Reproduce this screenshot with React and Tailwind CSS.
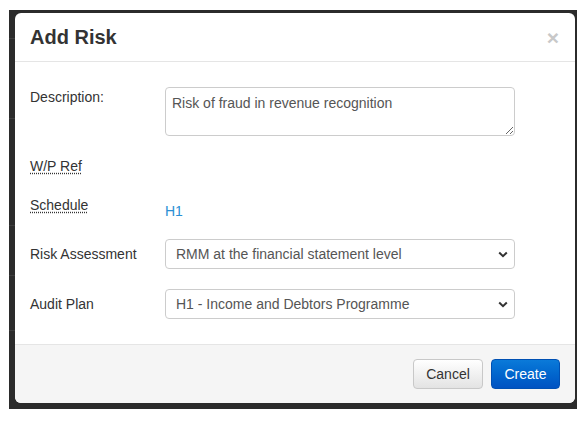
import React from "react";

const Chevron = () => (
  <svg width="10" height="7" viewBox="0 0 10 7" className="shrink-0">
    <path d="M1.2 1.5 L5 5.2 L8.8 1.5" fill="none" stroke="#333" strokeWidth="2" />
  </svg>
);

function SelectBox({ value }) {
  return (
    <div className="flex h-[30px] w-[350px] items-center justify-between rounded-[4px] border border-[#ccc] bg-white pl-[10px] pr-[6px] text-[14px] text-[#555]">
      <span>{value}</span>
      <Chevron />
    </div>
  );
}

export default function App() {
  return (
    <div
      className="min-h-[421px] w-[588px] bg-white pl-[9px] pt-[10px]"
      style={{ fontFamily: '"Liberation Sans", Arial, sans-serif' }}
    >
      <div className="flex h-[399px] w-[568px] bg-[#2b2b2b]">
        {/* page behind the backdrop, barely visible */}
        <div className="relative w-[6px] shrink-0 overflow-hidden">
          <div className="absolute left-0 right-0 top-[28px] h-px bg-[#3d3d3d]" />
          <div className="absolute left-0 right-0 top-[108px] h-px bg-[#3d3d3d]" />
          <div className="absolute left-0 right-0 top-[215px] h-px bg-[#3d3d3d]" />
          <div className="absolute left-0 right-0 top-[265px] h-px bg-[#3d3d3d]" />
          <div className="absolute left-0 right-0 top-[320px] h-px bg-[#3d3d3d]" />
        </div>

        <div className="mb-[6px] mt-[3px] flex w-[560px] flex-col overflow-hidden rounded-[6px] bg-white">
          <div className="flex h-[49px] shrink-0 items-center justify-between border-b border-[#e5e5e5] pl-[15px] pr-[16px]">
            <h4 className="text-[20px] font-bold leading-none text-[#333]">Add Risk</h4>
            <span className="text-[21px] font-bold leading-none text-[#c8c8c8]">×</span>
          </div>

          <div className="flex-1 px-[15px] pt-[25px] text-[14px] leading-[20px] text-[#333]">
            <div className="flex h-[49px]">
              <div className="w-[135px]">Description:</div>
              <textarea
                defaultValue="Risk of fraud in revenue recognition"
                className="h-[49px] w-[350px] rounded-[4px] border border-[#ccc] px-[6px] pt-[5px] text-[14px] leading-[20px] text-[#555] outline-none"
              />
            </div>

            <div className="mt-[20px] flex h-[20px]">
              <span className="underline decoration-dotted underline-offset-2">W/P Ref</span>
            </div>

            <div className="mt-[19px] flex">
              <div className="w-[135px]">
                <span className="underline decoration-dotted underline-offset-2">Schedule</span>
              </div>
              <a className="mt-[6px] text-[#2a8fd4]">H1</a>
            </div>

            <div className="mt-[18px] flex items-center">
              <div className="w-[135px]">Risk Assessment</div>
              <SelectBox value="RMM at the financial statement level" />
            </div>

            <div className="mt-[20px] flex items-center">
              <div className="w-[135px]">Audit Plan</div>
              <SelectBox value="H1 - Income and Debtors Programme" />
            </div>
          </div>

          <div className="flex h-[59px] shrink-0 items-start justify-end gap-[8px] border-t border-[#e5e5e5] bg-[#f5f5f5] pr-[15px] pt-[14px]">
            <button className="h-[30px] w-[70px] rounded-[4px] border border-[#c8c8c8] bg-gradient-to-b from-white to-[#e3e3e3] text-[14px] text-[#333]">
              Cancel
            </button>
            <button className="h-[30px] w-[69px] rounded-[4px] border border-[#0050b3] bg-gradient-to-b from-[#0b7ad9] to-[#0052c2] text-[14px] text-white">
              Create
            </button>
          </div>
        </div>
      </div>
    </div>
  );
}
